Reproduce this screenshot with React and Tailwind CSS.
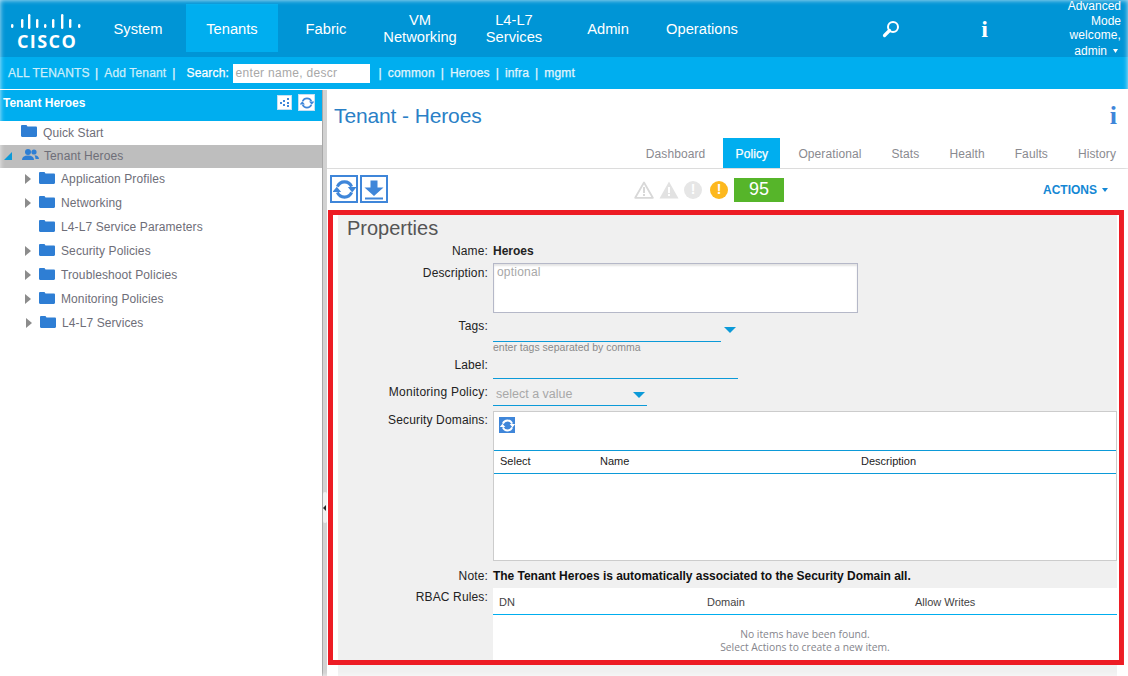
const navItems = [
  { label: 'System' },
  { label: 'Tenants', active: true },
  { label: 'Fabric' },
  { label: 'VM Networking' },
  { label: 'L4-L7 Services' },
  { label: 'Admin' },
  { label: 'Operations' },
];

const treeItems = [
  { label: 'Application Profiles', arrow: true },
  { label: 'Networking', arrow: true },
  { label: 'L4-L7 Service Parameters' },
  { label: 'Security Policies', arrow: true },
  { label: 'Troubleshoot Policies', arrow: true },
  { label: 'Monitoring Policies', arrow: true },
  { label: 'L4-L7 Services', arrow: true, shift: true },
];

const tabs = ['Dashboard', 'Policy', 'Operational', 'Stats', 'Health', 'Faults', 'History'];

function CiscoLogo() {
  // x, top, bottom of each bar, read off the reference
  const bars = [
    [12, 10, 14], [22, 5, 14], [29, 0, 15], [37, 5, 14], [45, 10, 14], [53, 5, 14], [62, 0, 15], [70, 5, 14], [79, 10, 14],
  ];
  return (
    <div className="w-[91px] h-full pt-[14px] flex flex-col">
      <svg width="91" height="16" viewBox="0 0 91 16" fill="#fff">
        {bars.map(([x, top, bottom]) => (
          <rect key={x} x={x - 1} y={top} width="2.400" height={bottom - top} rx="1.200" />
        ))}
      </svg>
      <span className="mt-[4px] pl-[17px] text-[18px] leading-[15px] font-bold tracking-[1.400px] text-white font-['Open_Sans',sans-serif]">
        CISCO
      </span>
    </div>
  );
}

function RefreshIcon({ size, color, width = 3 }) {
  return (
    <svg width={size} height={size} viewBox="0 0 24 24" fill="none">
      <path d="M4.600 9A8 8 0 0 1 19.400 9M19.400 15A8 8 0 0 1 4.600 15" stroke={color} strokeWidth={width} />
      <path d="M15.500 9.500h9L20 15zM-.5 14.500h9L4 9z" fill={color} />
    </svg>
  );
}

function Folder({ className }) {
  return (
    <svg className={className} width="16" height="12" viewBox="0 0 16 12">
      <path d="M0 1.200C0 .5.5 0 1.200 0h4.300l1 1.400h8.300c.7 0 1.200.5 1.200 1.200v8.200c0 .7-.5 1.200-1.200 1.200H1.200C.5 12 0 11.500 0 10.800z" fill="#2e7ed4" />
    </svg>
  );
}

function People() {
  return (
    <svg width="17" height="12" viewBox="0 0 17 12" fill="#2e7ed4">
      <circle cx="6" cy="3" r="3" />
      <path d="M0 11c0-3 2-4.500 6-4.500s6 1.500 6 4.500z" />
      <circle cx="12" cy="3" r="2.600" />
      <path d="M12.500 6.200c2.500 0 4.500 1.300 4.500 3.800h-3.500c0-1.500-.5-2.800-1-3.800z" />
    </svg>
  );
}

function Caret() {
  return (
    <svg width="12" height="6" viewBox="0 0 12 6">
      <path d="M0 0h12L6 6z" fill="#0c9ad8" />
    </svg>
  );
}

function Sep() {
  return <span className="text-[#e6f6fd]">|</span>;
}

function SubHeader() {
  return (
    <div className="h-[32px] bg-[#00aeef] flex items-center pl-[8px] text-[12px] tracking-[0.15px] [-webkit-text-stroke:0.25px] text-[#cdeefb]">
      <span className="w-[87px]">ALL TENANTS</span>
      <Sep />
      <span className="ml-[6px] w-[68px]">Add Tenant</span>
      <Sep />
      <span className="ml-[11px] w-[46px] text-white">Search:</span>
      <div className="w-[137px] h-[19px] bg-white px-[3px] text-[12px] leading-[18px] tracking-[0.3px] [-webkit-text-stroke:0] text-[#a8a8a8]">
        enter name, descr
      </div>
      <span className="ml-[9px] mr-[6px]"><Sep /></span>
      <span className="text-[#e2f5fd]">common</span>
      <span className="mx-[6px]"><Sep /></span>
      <span className="text-[#e2f5fd]">Heroes</span>
      <span className="mx-[6px]"><Sep /></span>
      <span className="text-[#e2f5fd]">infra</span>
      <span className="mx-[6px]"><Sep /></span>
      <span className="text-[#e2f5fd]">mgmt</span>
    </div>
  );
}

function Header() {
  return (
    <div className="h-[57px] bg-[#0095d6] flex text-white text-[14.700px] shrink-0">
      <CiscoLogo />
      {navItems.map(({ label, active }) => (
        <div key={label} className="w-[94px] flex items-center justify-center">
          <div className={`w-[92px] h-[48px] mb-[1px] pt-[2px] flex items-center justify-center text-center leading-[17px] px-[14px] ${active ? 'bg-[#00aeef]' : ''}`}>
            {label}
          </div>
        </div>
      ))}
      <div className="w-[94px]" />
      <div className="w-[94px] flex items-center justify-center pl-[2px]">
        <svg width="18" height="18" viewBox="0 0 18 18" fill="none" stroke="#fff">
          <circle cx="11" cy="7" r="5" strokeWidth="2" />
          <path d="M7.500 10.500L2.500 15.500" strokeWidth="3.200" strokeLinecap="round" />
        </svg>
      </div>
      <div className="w-[94px] flex items-center justify-center pl-[1px] font-['Liberation_Serif',serif] font-bold text-[24px]">i</div>
      <div className="flex-1 pr-[7px] text-right text-[12px] leading-[14.500px] -mt-[1px]">
        <div>Advanced</div>
        <div>Mode</div>
        <div className="tracking-[0.1px]">welcome,</div>
        <div className="flex justify-end items-center mt-[1px] pr-[3px]">
          admin
          <svg className="ml-[6px]" width="5" height="4" viewBox="0 0 5 4"><path d="M0 0h5L2.500 4z" fill="#fff" /></svg>
        </div>
      </div>
    </div>
  );
}

function Sidebar() {
  return (
    <div className="w-[322px] shrink-0 flex flex-col text-[12px] tracking-[0.1px] text-[#6e6e78]">
      <div className="h-[31px] bg-[#00aeef] flex items-start pt-[5px] pl-[3px] pr-[7px] text-white font-bold tracking-normal">
        <span className="flex-1 leading-[16px]">Tenant Heroes</span>
        <div className="w-[15px] h-[15px] bg-white border border-[#c5dff2] flex items-center justify-center">
          <svg width="9" height="9" viewBox="0 0 9 9" fill="#3f86d9">
            <rect x="0" y="4" width="2" height="2" />
            <rect x="3" y="2" width="2" height="2" />
            <rect x="3" y="6" width="2" height="2" />
            <rect x="7" y="0" width="2" height="2" />
            <rect x="7" y="4" width="2" height="2" />
            <rect x="7" y="7" width="2" height="2" />
          </svg>
        </div>
        <div className="ml-[6px] w-[17px] h-[17px] -mt-[1px] bg-white border border-[#c5dff2] flex items-center justify-center">
          <RefreshIcon size={14} color="#3f86d9" />
        </div>
      </div>
      <div className="h-[24px] flex items-center pl-[21px] pb-[1px]">
        <Folder className="-mt-[3px]" />
        <span className="ml-[6px]">Quick Start</span>
      </div>
      <div className="h-[23px] bg-[#bebebe] flex items-center pl-[4px] pb-[1px]">
        <svg width="8" height="8" viewBox="0 0 8 8"><path d="M8 0v8H0z" fill="#0c9ad8" /></svg>
        <span className="ml-[10px] -mt-[3px]"><People /></span>
        <span className="ml-[5px]">Tenant Heroes</span>
      </div>
      {treeItems.map(({ label, arrow, shift }) => (
        <div key={label} className={`h-[24px] flex items-center pb-[3px] ${shift ? 'pl-[26px]' : 'pl-[25px]'}`}>
          <svg className="shrink-0" width="6" height="10" viewBox="0 0 6 10">
            {arrow && <path d="M0 0l6 5-6 5z" fill="#8c8c8c" />}
          </svg>
          <Folder className="ml-[8px] -mt-[1px]" />
          <span className="ml-[6px]">{label}</span>
        </div>
      ))}
    </div>
  );
}

function Splitter() {
  return (
    <div className="relative w-[5px] shrink-0 bg-[#d2d2d2] border-l border-[#a8a8a8]">
      <div className="absolute left-0 top-[402px] w-[4px] h-[31px] bg-[#f0f0f0] rounded-[2px] flex items-center">
        <svg width="3" height="6" viewBox="0 0 3 6"><path d="M3 0v6L0 3z" fill="#222" /></svg>
      </div>
    </div>
  );
}

function Tabs() {
  return (
    <div className="h-[31px] mt-[7px] shrink-0 border-b border-[#dcdcdc] flex justify-end gap-[30px] pr-[12px] text-[12px] tracking-[0.1px] text-[#8a8a90]">
      {tabs.map((tab) => (
        <div
          key={tab}
          className={tab === 'Policy'
            ? 'h-[30px] w-[57px] -mx-[12px] bg-[#00aeef] text-white [-webkit-text-stroke:0.25px] flex items-center justify-center pt-[1px]'
            : 'h-[30px] flex items-center pt-[1px]'}
        >
          {tab}
        </div>
      ))}
    </div>
  );
}

function Toolbar() {
  return (
    <div className="h-[41px] shrink-0 flex items-center pl-[3px] pr-[20px]">
      <div className="w-[28px] h-[28px] border-2 border-[#3f86d9] flex items-center justify-center -mt-[1px]">
        <RefreshIcon size={23} color="#3f86d9" width={3.2} />
      </div>
      <div className="ml-[2px] w-[28px] h-[28px] border-2 border-[#3f86d9] flex items-center justify-center -mt-[1px]">
        <svg width="24" height="24" viewBox="0 0 24 24" fill="#3f86d9">
          <path d="M8.500 3.500h7v7h6l-9.500 8.500L2.500 10.500h6z" />
          <rect x="3" y="20.500" width="18" height="2" />
        </svg>
      </div>
      <div className="ml-[246px] flex items-center">
        <svg width="20" height="18" viewBox="0 0 20 18">
          <path d="M10 1.500L18.800 16.800H1.200z" fill="none" stroke="#d8d8d8" strokeWidth="1.800" strokeLinejoin="round" />
          <path d="M9 6h2v6H9zM9 13h2v2H9z" fill="#d8d8d8" />
        </svg>
        <svg className="ml-[5px]" width="20" height="18" viewBox="0 0 20 18">
          <path d="M10 .5L19.500 17.500H.5z" fill="#e2e2e2" />
          <path d="M9 6h2v6H9zM9 13h2v2H9z" fill="#fff" />
        </svg>
        <div className="ml-[5px] w-[18px] h-[18px] rounded-full bg-[#e6e6e6] flex items-center justify-center text-white font-bold text-[14px]">!</div>
        <div className="ml-[8px] w-[18px] h-[18px] rounded-full bg-[#fdb81e] flex items-center justify-center text-white font-bold text-[14px]">!</div>
        <div className="ml-[6px] w-[50px] h-[24px] bg-[#56b52a] flex items-center justify-center text-white text-[18px]">95</div>
      </div>
      <div className="ml-auto flex items-center gap-[5px] text-[12px] font-bold text-[#1487d4]">
        ACTIONS
        <svg width="6" height="4" viewBox="0 0 6 4"><path d="M0 0h6L3 4z" fill="#1487d4" /></svg>
      </div>
    </div>
  );
}

function FormRow({ label, labelClass, className, children }) {
  return (
    <div className={`flex shrink-0 ${className}`}>
      <div className={`w-[150px] text-right tracking-[0.15px] text-[#222] ${labelClass}`}>{label}</div>
      <div className="ml-[5px] flex-1 min-w-0">{children}</div>
    </div>
  );
}

function Properties() {
  return (
    <div className="flex-1 min-h-0 ml-[11px] mr-[11px] bg-[#f0f0f0] flex flex-col overflow-hidden text-[12px]">
      <div className="mt-[6px] pl-[9px] h-[24px] leading-[24px] text-[20px] text-[#555]">Properties</div>
      <FormRow label="Name:" labelClass="leading-[20px]" className="mt-[1px] h-[20px]">
        <span className="leading-[20px] font-bold text-[#222]">Heroes</span>
      </FormRow>
      <FormRow label="Description:" labelClass="leading-[20px]" className="mt-[2px]">
        <div className="w-[365px] h-[50px] bg-white border border-[#b5b8c8] px-[3px] pt-[1px] leading-[14px] tracking-[0.2px] text-[#a8a8a8] shadow-[inset_0_2px_2px_#e4e4e4]">optional</div>
      </FormRow>
      <FormRow label="Tags:" labelClass="leading-[17px]" className="mt-[5px]">
        <div className="flex items-start">
          <div className="w-[228px] h-[24px] border-b border-[#0c9ad8]" />
          <span className="ml-[3px] mt-[9px]"><Caret /></span>
        </div>
        <div className="text-[10.500px] leading-[11px] text-[#8a8a8a]">enter tags separated by comma</div>
      </FormRow>
      <FormRow label="Label:" labelClass="leading-[21px]" className="mt-[2px]">
        <div className="w-[245px] h-[24px] border-b border-[#0c9ad8]" />
      </FormRow>
      <FormRow label="Monitoring Policy:" labelClass="leading-[16px] tracking-[0.25px]" className="mt-[5px]">
        <div className="w-[154px] h-[22px] border-b border-[#0c9ad8] flex items-center justify-between pl-[3px] pr-[2px] text-[12.500px] text-[#a8a8a8]">
          select a value
          <Caret />
        </div>
      </FormRow>
      <FormRow label="Security Domains:" labelClass="leading-[19px]" className="mt-[5px]">
        <div className="h-[150px] bg-white border border-[#cccccc] text-[11px] text-[#222]">
          <div className="h-[38px] pl-[5px] pt-[5px]">
            <div className="w-[16px] h-[16px] bg-[#3f86d9] flex items-center justify-center">
              <RefreshIcon size={15} color="#fff" />
            </div>
          </div>
          <div className="h-[24px] border-y border-[#0c9ad8] flex items-center pl-[6px] pb-[1px]">
            <span className="w-[100px]">Select</span>
            <span className="w-[261px]">Name</span>
            <span>Description</span>
          </div>
        </div>
      </FormRow>
      <FormRow label="Note:" labelClass="leading-[20px]" className="mt-[5px] h-[20px]">
        <span className="leading-[20px] font-bold text-[#111] tracking-[-0.03px]">The Tenant Heroes is automatically associated to the Security Domain all.</span>
      </FormRow>
      <FormRow label="RBAC Rules:" labelClass="leading-[19px]" className="mt-[2px]">
        <div className="h-[72px] bg-white text-[11px] text-[#444]">
          <div className="h-[27px] border-b border-[#00aeef] flex items-center pl-[6px] pt-[2px]">
            <span className="w-[208px]">DN</span>
            <span className="w-[208px]">Domain</span>
            <span>Allow Writes</span>
          </div>
          <div className="pt-[13px] text-center text-[10.300px] leading-[13px] text-[#85858c] font-['Open_Sans',sans-serif]">
            <div>No items have been found.</div>
            <div>Select Actions to create a new item.</div>
          </div>
        </div>
      </FormRow>
    </div>
  );
}

function Main() {
  return (
    <div className="flex-1 min-w-0 flex flex-col">
      <div className="h-[41px] shrink-0 flex items-end pl-[7px] pr-[11px] text-[21px] leading-[26px] text-[#2a80c6]">
        <span className="flex-1 mb-[2px] tracking-[-0.12px]">Tenant - Heroes</span>
        <span className="font-['Liberation_Serif',serif] font-bold text-[26px] text-[#3f86d9] mb-[2px]">i</span>
      </div>
      <Tabs />
      <Toolbar />
      <Properties />
    </div>
  );
}

export default function App() {
  return (
    <div className="relative w-[1128px] h-[676px] overflow-hidden bg-white flex flex-col font-['Liberation_Sans',Arial,sans-serif]">
      <Header />
      <SubHeader />
      <div className="h-px bg-white shrink-0" />
      <div className="flex-1 min-h-0 flex">
        <Sidebar />
        <Splitter />
        <Main />
      </div>
      {/* red annotation frame sitting over the page */}
      <div className="absolute left-[328px] top-[210px] w-[796px] h-[455px] border-[5px] border-[#ed1c24] pointer-events-none" />
      {/* soft edge of the original capture */}
      <div className="absolute inset-0 pointer-events-none shadow-[inset_0_0_5px_rgba(255,255,255,0.8)]" />
    </div>
  );
}
